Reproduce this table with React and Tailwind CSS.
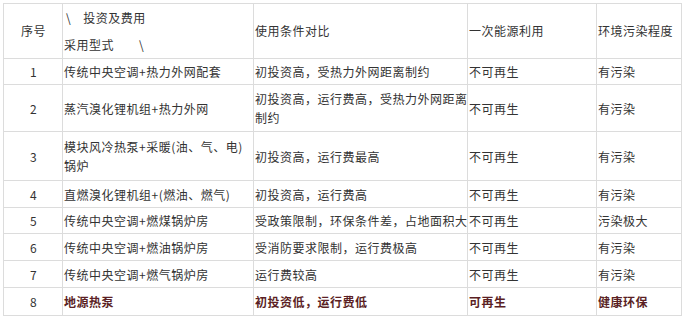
const rows = [
  { n: '1', type: '传统中央空调+热力外网配套', cond: '初投资高，受热力外网距离制约', energy: '不可再生', env: '有污染', h: 'h-[26px]' },
  { n: '2', type: '蒸汽溴化锂机组+热力外网', cond: <>初投资高，运行费高，受热力外网距离<br />制约</>, energy: '不可再生', env: '有污染', h: 'h-[47px]' },
  { n: '3', type: <>模块风冷热泵+采暖(油、气、电)<br />锅炉</>, cond: '初投资高，运行费最高', energy: '不可再生', env: '有污染', h: 'h-[49px]' },
  { n: '4', type: '直燃溴化锂机组+(燃油、燃气)', cond: '初投资高，运行费高', energy: '不可再生', env: '有污染', h: 'h-[27px]' },
  { n: '5', type: '传统中央空调+燃煤锅炉房', cond: '受政策限制，环保条件差，占地面积大', energy: '不可再生', env: '污染极大', h: 'h-[26px]' },
  { n: '6', type: '传统中央空调+燃油锅炉房', cond: '受消防要求限制，运行费极高', energy: '不可再生', env: '有污染', h: 'h-[27px]' },
  { n: '7', type: '传统中央空调+燃气锅炉房', cond: '运行费较高', energy: '不可再生', env: '有污染', h: 'h-[27px]' },
];

const cell = 'border border-[#dcdcdc] align-middle px-0 pl-[1px] whitespace-nowrap';

export default function App() {
  return (
    <div
      className="w-[687px] h-[321px] bg-white pt-[3px] pl-[3px] text-[12px] tracking-[0.5px] text-[#333]"
      style={{ fontFamily: "'Noto Sans CJK SC', 'Noto Sans', sans-serif" }}
    >
      <table className="table-fixed border-collapse w-[678px]">
        <colgroup>
          <col className="w-[59px]" />
          <col className="w-[191px]" />
          <col className="w-[214px]" />
          <col className="w-[129px]" />
          <col className="w-[85px]" />
        </colgroup>
        <tbody>
          <tr className="h-[55px]">
            <td className={cell + ' text-center'}>序号</td>
            <td className={cell + ' leading-[27px]'}>
              <div className="pl-[2px]">\<span className="ml-[12px]">投资及费用</span></div>
              <div>采用型式<span className="ml-[25px]">\</span></div>
            </td>
            <td className={cell}>使用条件对比</td>
            <td className={cell}>一次能源利用</td>
            <td className={cell}>环境污染程度</td>
          </tr>
          {rows.map((r) => (
            <tr key={r.n} className={r.h + ' leading-[19px]'}>
              <td className={cell + ' text-center'}>{r.n}</td>
              <td className={cell}>{r.type}</td>
              <td className={cell}>{r.cond}</td>
              <td className={cell}>{r.energy}</td>
              <td className={cell}>{r.env}</td>
            </tr>
          ))}
          <tr className="h-[28px] font-bold text-[#5b1f24]">
            <td className={cell + ' text-center font-normal text-[#333]'}>8</td>
            <td className={cell}>地源热泵</td>
            <td className={cell}>初投资低，运行费低</td>
            <td className={cell}>可再生</td>
            <td className={cell}>健康环保</td>
          </tr>
        </tbody>
      </table>
    </div>
  );
}
